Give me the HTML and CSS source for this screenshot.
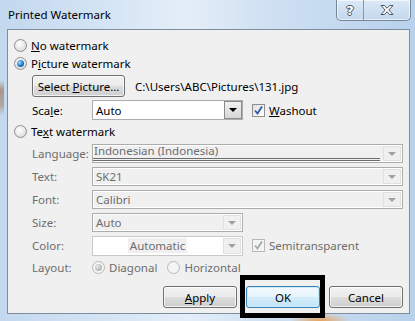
FILE: index.html
```html
<!DOCTYPE html>
<html lang="en">
<head>
    <meta charset="UTF-8">
    <title>Printed Watermark</title>
    <link rel="stylesheet" href="styles.css">
</head>
<body>
    <div class="window">
        <div class="titlebar">
            <span class="title">Printed Watermark</span>
            <div class="caption">
                <span class="cap-btn help">?</span>
                <span class="cap-btn close">
                    <svg width="16" height="12" viewBox="0 0 16 12">
                        <path d="M2 1.5h3.5L8 4.3 10.5 1.5H14L9.8 6 14 10.5h-3.5L8 7.7 5.5 10.5H2L6.2 6z" fill="#fff" stroke="#4a5564" stroke-width="1" stroke-linejoin="round"/>
                    </svg>
                </span>
            </div>
        </div>

        <div class="client">
            <div class="option"><span class="radio"></span><span><u>N</u>o watermark</span></div>
            <div class="option"><span class="radio checked"></span><span>P<u>i</u>cture watermark</span></div>

            <div class="indent pic-row">
                <button class="btn select">Select <u>P</u>icture…</button>
                <span class="path">C:\Users\ABC\Pictures\131.jpg</span>
            </div>

            <div class="indent form-row">
                <span class="label">Sca<u>l</u>e:</span>
                <div class="combo small">
                    <span class="value">Auto</span>
                    <span class="drop"><span class="arrow"></span></span>
                </div>
                <span class="check"><svg width="11" height="11" viewBox="0 0 11 11"><path d="M2 5.5l2.5 3L9 1.5" fill="none" stroke="#2c5aa0" stroke-width="1.8"/></svg></span>
                <span><u>W</u>ashout</span>
            </div>

            <div class="option text-opt"><span class="radio"></span><span>Te<u>x</u>t watermark</span></div>

            <div class="indent form-row off">
                <span class="label">Language:</span>
                <div class="combo wide">
                    <span class="value lined">Indonesian (Indonesia)</span>
                    <span class="drop"><span class="arrow"></span></span>
                </div>
            </div>
            <div class="indent form-row off">
                <span class="label">Text:</span>
                <div class="combo wide">
                    <span class="value">SK21</span>
                    <span class="drop"><span class="arrow"></span></span>
                </div>
            </div>
            <div class="indent form-row off">
                <span class="label">Font:</span>
                <div class="combo wide">
                    <span class="value">Calibri</span>
                    <span class="drop"><span class="arrow"></span></span>
                </div>
            </div>
            <div class="indent form-row off">
                <span class="label">Size:</span>
                <div class="combo small">
                    <span class="value">Auto</span>
                    <span class="drop"><span class="arrow"></span></span>
                </div>
            </div>
            <div class="indent form-row off">
                <span class="label">Color:</span>
                <div class="combo small color">
                    <span class="value"><span class="auto">Automatic</span></span>
                    <span class="drop"><span class="arrow"></span></span>
                </div>
                <span class="check"><svg width="11" height="11" viewBox="0 0 11 11"><path d="M2 5.5l2.5 3L9 1.5" fill="none" stroke="#a8a8a8" stroke-width="1.8"/></svg></span>
                <span>Semitransparent</span>
            </div>
            <div class="indent form-row off layout-row">
                <span class="label">Layout:</span>
                <span class="radio dim checked"></span><span class="diag">Diagonal</span>
                <span class="radio dim"></span><span>Horizontal</span>
            </div>

            <div class="buttons">
                <button class="btn"><u>A</u>pply</button>
                <button class="btn default">OK</button>
                <button class="btn">Cancel</button>
            </div>
        </div>

        <div class="highlight"></div>
    </div>
</body>
</html>
```

FILE: styles.css
```css
body {
    margin: 0;
    overflow: hidden;
    font-family: "Noto Sans", "Open Sans", sans-serif;
    font-size: 11.5px;
}
.window {
    position: relative;
    width: 415px;
    height: 321px;
    background:
        radial-gradient(ellipse 30px 8px at 320px 321px, #e9a25a 0%, rgba(233, 162, 90, 0) 100%),
        linear-gradient(180deg, rgba(0, 0, 0, 0) 25%, rgba(150, 95, 55, 0.55) 28%, rgba(150, 95, 55, 0.4) 33%, rgba(0, 0, 0, 0) 36%) left / 4px 100% no-repeat,
        linear-gradient(90deg, #c3d8ee 0%, #d4e4f4 25%, #e4eef9 45%, #cfe0f2 65%, #b8d1ec 100%);
}
.titlebar {
    height: 29px;
    display: flex;
    justify-content: space-between;
}
.title {
    padding: 7px 0 0 8px;
    color: #000;
}
.caption {
    display: flex;
    height: 20px;
    margin-right: 4px;
    border: 1px solid #75859a;
    border-top: none;
    border-radius: 0 0 5px 5px;
    background: linear-gradient(180deg, #dce9f6, #c3d7ee);
    box-shadow: inset 0 0 0 1px rgba(255, 255, 255, 0.6);
}
.cap-btn {
    display: flex;
    align-items: center;
    justify-content: center;
}
.help {
    width: 26px;
    border-right: 1px solid #8797ab;
    font-family: "DejaVu Sans", sans-serif;
    font-weight: bold;
    font-size: 13px;
    color: #fff;
    text-shadow: -1px 0 #4a5564, 1px 0 #4a5564, 0 -1px #4a5564, 0 1px #4a5564;
}
.close {
    width: 46px;
}
.client {
    margin-left: 7px;
    width: 403px;
    height: 285px;
    box-sizing: border-box;
    border: 1px solid #7d8da0;
    background-color: #f0f0f0;
    padding: 6px 6px 0 6px;
}
.option {
    display: flex;
    align-items: center;
    height: 18px;
    gap: 4px;
}
.radio {
    width: 11px;
    height: 11px;
    border: 1px solid #8e8f8f;
    border-radius: 50%;
    background: radial-gradient(circle at 40% 35%, #ffffff 0%, #e4e4e4 60%, #cfcfcf 100%);
    flex-shrink: 0;
    position: relative;
}
.radio.checked::after {
    content: "";
    position: absolute;
    left: 2px;
    top: 2px;
    width: 7px;
    height: 7px;
    border-radius: 50%;
    background: radial-gradient(circle at 35% 35%, #9fd8ff 0%, #1f7ac6 55%, #0d3f7a 100%);
}
.radio.dim {
    border-color: #b8b8b8;
    background: #f4f4f4;
}
.radio.dim.checked::after {
    background: radial-gradient(circle at 35% 35%, #e6e6e6 0%, #b5b5b5 70%, #a0a0a0 100%);
}
.indent {
    margin-left: 18px;
}
.pic-row {
    display: flex;
    align-items: center;
    margin-top: 3px;
    height: 22px;
}
.path {
    margin-left: 10px;
}
.btn {
    font-family: inherit;
    font-size: 11.5px;
    color: #000;
    height: 22px;
    padding: 0;
    border: 1px solid #707070;
    border-radius: 3px;
    background: linear-gradient(180deg, #f2f2f2 0%, #ebebeb 48%, #dddddd 52%, #cfcfcf 100%);
    box-shadow: inset 0 0 0 1px rgba(255, 255, 255, 0.7);
}
.select {
    width: 93px;
}
.form-row {
    display: flex;
    align-items: center;
    height: 20px;
    margin-top: 3px;
}
.label {
    width: 60px;
    flex-shrink: 0;
}
.combo {
    display: flex;
    height: 100%;
    box-sizing: border-box;
    border: 1px solid #abadb3;
    background-color: #fff;
}
.combo.small {
    width: 151px;
}
.combo.wide {
    width: 311px;
}
.value {
    flex: 1;
    padding: 0 3px;
    display: flex;
    align-items: center;
}
.drop {
    width: 16px;
    display: flex;
    align-items: center;
    justify-content: center;
    border: 1px solid #8c8c8c;
    background: linear-gradient(180deg, #f2f2f2, #d6d6d6);
}
.arrow {
    width: 0;
    height: 0;
    border-left: 4px solid transparent;
    border-right: 4px solid transparent;
    border-top: 4px solid #000;
}
.check {
    width: 11px;
    height: 11px;
    border: 1px solid #8e8f8f;
    background: linear-gradient(135deg, #e0e0e0, #ffffff);
    margin: 0 4px 0 9px;
    display: flex;
    align-items: center;
    justify-content: center;
}
.text-opt {
    margin-top: 2px;
}
.off {
    color: #6d6d6d;
    height: 19px;
    margin-top: 4px;
}
.off .combo {
    border: 1px solid #acacac;
    background-color: #f0f0f0;
    box-shadow: inset 0 0 0 1px #fff;
}
.off .drop {
    margin: 1px;
    border: 1px solid #e0e0e0;
    background: #f0f0f0;
}
.off .arrow {
    border-top-color: #a0a0a0;
}
.value.lined {
    align-items: flex-start;
    border-bottom: 3px double #6d6d6d;
    margin: 0 2px 1px 0;
    padding-left: 1px;
    line-height: 11px;
}
.off .combo.color {
    height: 20px;
    background-color: #fff;
    border-color: #c9c9c9;
    box-shadow: none;
}
.color .value {
    justify-content: center;
}
.auto {
    background-color: #f0f0f0;
    padding: 0 2px;
}
.off .check {
    border-color: #b8b8b8;
    background: #f4f4f4;
}
.layout-row {
    height: 18px;
    margin-top: 3px;
    gap: 4px;
}
.layout-row .label {
    width: 56px;
}
.diag {
    margin-right: 6px;
}
.buttons {
    display: flex;
    justify-content: flex-end;
    gap: 9px;
    margin-top: 10px;
}
.buttons .btn {
    width: 74px;
}
.btn.default {
    border-color: #3c7fb1;
    box-shadow: inset 0 0 0 1px #c8ecfb;
    background: linear-gradient(180deg, #f4fafe 0%, #e6f4fc 48%, #d3ecfa 52%, #c4e4f7 100%);
}
.highlight {
    position: absolute;
    left: 240px;
    top: 275px;
    width: 85px;
    height: 43px;
    box-sizing: border-box;
    border: 5px solid #000;
}
```
